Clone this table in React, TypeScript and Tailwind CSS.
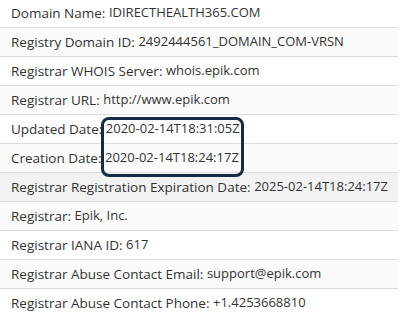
const rows: [string, string][] = [
  ['Domain Name:', 'IDIRECTHEALTH365.COM'],
  ['Registry Domain ID:', '2492444561_DOMAIN_COM-VRSN'],
  ['Registrar WHOIS Server:', 'whois.epik.com'],
  ['Registrar URL:', 'http://www.epik.com'],
  ['Updated Date:', '2020-02-14T18:31:05Z'],
  ['Creation Date:', '2020-02-14T18:24:17Z'],
  ['Registrar Registration Expiration Date:', '2025-02-14T18:24:17Z'],
  ['Registrar:', 'Epik, Inc.'],
  ['Registrar IANA ID:', '617'],
  ['Registrar Abuse Contact Email:', 'support@epik.com'],
  ['Registrar Abuse Contact Phone:', '+1.4253668810'],
]

export default function App() {
  return (
    <div className="w-[401px] h-[317px] bg-white overflow-hidden relative" style={{ fontFamily: '"Open Sans", sans-serif' }}>
      <ul className="w-[398px] -mt-[1px]">
        {rows.map(([label, value], i) => (
          <li
            key={i}
            className={`h-[29px] flex items-center pl-[11px] border-b border-[#dddddd] text-[#333333] whitespace-nowrap ${
              i === 6 ? 'bg-[#f2f2f2]' : i % 2 === 1 ? 'bg-[#fbfbfb]' : 'bg-white'
            }`}
          >
            <span className="text-[13.5px]">{label}&nbsp;</span>
            <span className="text-[13px]">{value}</span>
          </li>
        ))}
      </ul>
      {/* marker around the two dates */}
      <div className="absolute left-[101px] top-[117px] w-[143px] h-[60px] border-[3px] border-[#172a45] rounded-[8px]" />
    </div>
  )
}
